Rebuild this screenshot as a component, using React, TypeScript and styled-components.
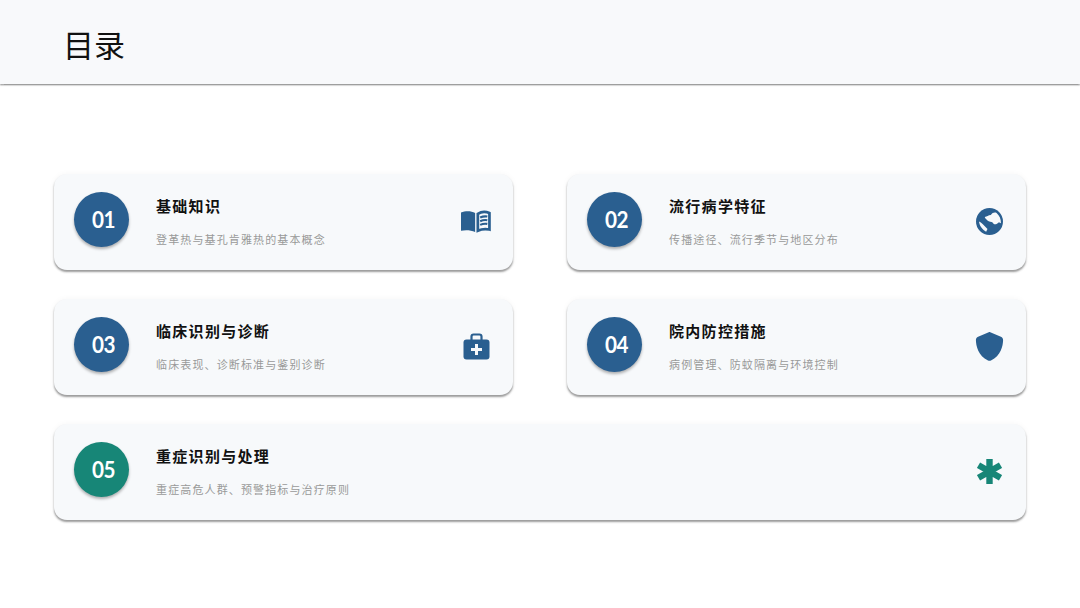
import React from "react";
import styled, { createGlobalStyle } from "styled-components";
import { FaShield } from "react-icons/fa6";

const Global = createGlobalStyle`
  html, body { margin: 0; padding: 0; background: #fff; }
  body { width: 1080px; height: 608px; overflow: hidden; font-family: "Liberation Serif", "Noto Sans CJK SC", serif; }
`;

const Page = styled.div`
  width: 1080px;
  height: 608px;
  display: flex;
  flex-direction: column;
`;

const Header = styled.header`
  height: 84px;
  flex: none;
  box-sizing: border-box;
  padding: 9px 0 0 63px;
  display: flex;
  align-items: center;
  background: #f8f9fb;
  box-shadow: 0 1.5px 1.5px rgba(0, 0, 0, 0.38);
`;

const Title = styled.h1`
  margin: 0;
  font-size: 31px;
  font-weight: 400;
  color: #111;
  line-height: 1;
`;

const Grid = styled.main`
  display: grid;
  grid-template-columns: 459px 459px;
  grid-auto-rows: 96px;
  column-gap: 54px;
  row-gap: 29px;
  padding: 90px 0 0 54px;
`;

const Card = styled.section<{ $wide?: boolean }>`
  grid-column: ${(p) => (p.$wide ? "1 / 3" : "auto")};
  display: flex;
  align-items: center;
  box-sizing: border-box;
  padding: 0 22px 5px 20px;
  border-radius: 13px;
  background: #f7f9fb;
  box-shadow: 0 2px 2px -0.5px rgba(0, 0, 0, 0.38), 0 0 6px rgba(0, 0, 0, 0.04);
`;

const Badge = styled.div<{ $color: string }>`
  width: 55px;
  height: 55px;
  flex: none;
  box-sizing: border-box;
  padding-left: 4px;
  border-radius: 50%;
  background: ${(p) => p.$color};
  color: #fff;
  display: flex;
  align-items: center;
  justify-content: center;
  box-shadow: 0 2px 3px rgba(0, 0, 0, 0.3);
`;

const Number = styled.span`
  display: block;
  font-family: Lato, "Liberation Sans", sans-serif;
  font-weight: 700;
  font-size: 22.5px;
  letter-spacing: -0.6px;
  transform: scaleX(0.92);
`;

const Body = styled.div`
  flex: 1;
  margin-left: 27px;
  padding-top: 6px;
  display: flex;
  flex-direction: column;
  gap: 16px;
`;

const Heading = styled.h2`
  margin: 0;
  font-size: 15px;
  line-height: 18px;
  font-weight: 700;
  letter-spacing: 1.3px;
  color: #111;
`;

const Sub = styled.p`
  margin: 0;
  font-size: 11px;
  line-height: 16px;
  letter-spacing: 1.13px;
  color: #999;
`;

const IconSlot = styled.div<{ $color: string }>`
  width: 30px;
  flex: none;
  padding-top: 3px;
  display: flex;
  justify-content: center;
  color: ${(p) => p.$color};
  line-height: 0;
`;

const BookIcon = () => (
  <svg width="31" height="23" viewBox="0 0 31 23" fill="none">
    <path d="M0 2.2C4.5.3 10.5.2 14.6 2.8V22.4C10.5 20.4 5 20 0 21Z" fill="currentColor" />
    <path d="M17.4 3.6C20.5 1.6 25.5 1.2 29.4 2.8V19.8C25.5 19 21 19.4 17.4 21Z" stroke="currentColor" strokeWidth="2.8" fill="none" />
    <path d="M19.8 7.4C22 6.4 25 6 27.2 6.4M19.8 11.2C22 10.2 25 9.8 27.2 10.2M19.8 15C22 14 25 13.6 27.2 14" stroke="currentColor" strokeWidth="2.2" />
  </svg>
);

const GlobeIcon = () => (
  <svg width="27" height="27" viewBox="0 0 80 80">
    <circle cx="40" cy="40" r="40" fill="currentColor" />
    <path d="M26 27C33 26 36 21 44 21C48 14 56 12 61 15C70 23 74 33 74 45L68 42C62 48 54 52 50 44C46 40 38 41 34 37C30 34 27 31 26 27Z" fill="#f7f9fb" />
    <path d="M9 40C16 42 24 52 34 62L30 70C18 64 10 52 9 40Z" fill="#f7f9fb" />
  </svg>
);

const CaseIcon = () => (
  <svg width="27" height="27" viewBox="0 0 27 27">
    <path d="M8.5 7V3.6C8.5 2.4 9.4 1.5 10.6 1.5H16.4C17.6 1.5 18.5 2.4 18.5 3.6V7" fill="none" stroke="currentColor" strokeWidth="2.2" />
    <rect x="0.5" y="6.5" width="26" height="20" rx="3" fill="currentColor" />
    <path d="M13.5 11V22M8 16.5H19" stroke="#f7f9fb" strokeWidth="3" />
  </svg>
);

const StarIcon = () => (
  <svg width="25" height="25" viewBox="0 0 25 25">
    <path d="M12.5 0V25M1.5 6.2L23.5 18.8M23.5 6.2L1.5 18.8" stroke="currentColor" strokeWidth="6.4" />
  </svg>
);

const BLUE = "#2a5f90";
const GREEN = "#178677";

const items = [
  { n: "01", t: "基础知识", s: "登革热与基孔肯雅热的基本概念", i: <BookIcon />, c: BLUE },
  { n: "02", t: "流行病学特征", s: "传播途径、流行季节与地区分布", i: <GlobeIcon />, c: BLUE },
  { n: "03", t: "临床识别与诊断", s: "临床表现、诊断标准与鉴别诊断", i: <CaseIcon />, c: BLUE },
  { n: "04", t: "院内防控措施", s: "病例管理、防蚊隔离与环境控制", i: <FaShield size={29} />, c: BLUE },
  { n: "05", t: "重症识别与处理", s: "重症高危人群、预警指标与治疗原则", i: <StarIcon />, c: GREEN, wide: true },
];

export default function App() {
  return (
    <Page>
      <Global />
      <Header>
        <Title>目录</Title>
      </Header>
      <Grid>
        {items.map((it) => (
          <Card key={it.n} $wide={it.wide}>
            <Badge $color={it.c}>
              <Number>{it.n}</Number>
            </Badge>
            <Body>
              <Heading>{it.t}</Heading>
              <Sub>{it.s}</Sub>
            </Body>
            <IconSlot $color={it.c}>{it.i}</IconSlot>
          </Card>
        ))}
      </Grid>
    </Page>
  );
}
